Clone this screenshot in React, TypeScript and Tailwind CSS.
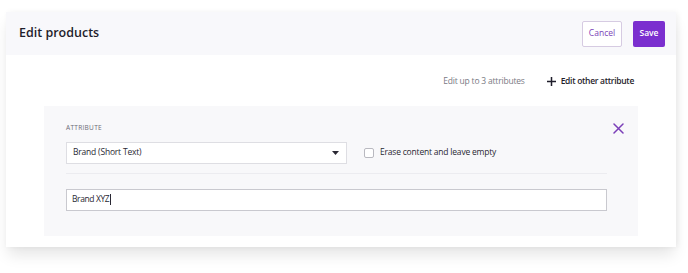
import React, { useState } from 'react';

const font = { fontFamily: '"Open Sans", "Noto Sans", sans-serif' };

const CloseIcon = () => (
  <svg width="11" height="11" viewBox="0 0 11 11" fill="none">
    <path d="M1 1L10 10M10 1L1 10" stroke="#7b3fb8" strokeWidth="1.5" strokeLinecap="round" />
  </svg>
);

const PlusIcon = () => (
  <svg width="9" height="9" viewBox="0 0 9 9" fill="none">
    <path d="M4.5 0V9M0 4.5H9" stroke="#1f1d2b" strokeWidth="1.5" />
  </svg>
);

const AttributePanel = () => {
  const [erase, setErase] = useState<boolean>(false);

  return (
    <div className="mx-[38px] mt-[18px] bg-[#f8f8fa] pl-[22px] pr-[14px] pt-[16px] pb-[25px]">
      <div className="flex h-[12px] items-start justify-between">
        <span className="mt-px text-[6.5px] uppercase tracking-[0.3px] text-[#6b6b75]">Attribute</span>
        <span className="mt-px">
          <CloseIcon />
        </span>
      </div>
      <div className="mr-[17px]">
        <div className="mt-[8px] flex items-center">
          <div className="flex h-[22px] w-[281px] items-center justify-between border border-[#dedee3] bg-white pl-[6px] pr-[7px]">
            <span className="text-[8.5px] tracking-[-0.2px] text-[#2a2833]">Brand (Short Text)</span>
            <svg width="7" height="4" viewBox="0 0 7 4">
              <path d="M0 0H7L3.5 4Z" fill="#2a2833" />
            </svg>
          </div>
          <button
            className="ml-[17px] flex items-center"
            type="button"
            onClick={() => setErase(!erase)}
          >
            <span className="h-[10px] w-[10px] rounded-[2px] border border-[#b9b9c0] bg-white" />
            <span className="ml-[6px] text-[8.5px] tracking-[-0.2px] text-[#2a2833]">
              Erase content and leave empty
            </span>
          </button>
        </div>
        <div className="mt-[9px] h-px bg-[#ececf0]" />
        <div className="mt-[15px] flex h-[22px] items-center border border-[#c9c9cf] bg-white pl-[5px]">
          <span className="text-[8.5px] tracking-[-0.4px] text-[#2a2833]">Brand XYZ</span>
          <span className="ml-px h-[11px] w-px bg-[#2a2833]" />
        </div>
      </div>
    </div>
  );
};

const App = () => (
  <div className="h-[273px] w-[688px] overflow-hidden bg-white" style={font}>
    <div className="ml-[6px] mt-[12px] w-[670px] bg-white shadow-[0_10px_14px_-2px_rgba(0,0,0,0.10),2px_0_6px_rgba(0,0,0,0.05)]">
      <div className="flex h-[43px] items-center justify-between bg-[#f8f8fb] pl-[13px] pr-[11px]">
        <h1 className="text-[12.5px] font-semibold text-[#1f1d2b]">Edit products</h1>
        <div className="flex items-center gap-[11px]">
          <button
            className="h-[26px] w-[40px] rounded-[2px] border border-[#d6cbe2] bg-white text-[8.5px] text-[#7b3fb8]"
            type="button"
          >
            Cancel
          </button>
          <button
            className="h-[26px] w-[32px] rounded-[2px] bg-[#7b2fcf] text-[8.5px] font-semibold text-white"
            type="button"
          >
            Save
          </button>
        </div>
      </div>
      <div className="pb-[11px]">
        <div className="flex items-center justify-end pr-[42px] pt-[20px]">
          <span className="text-[8.5px] tracking-[-0.2px] text-[#7a7a84]">Edit up to 3 attributes</span>
          <button className="ml-[22px] flex items-center gap-[5px]" type="button">
            <PlusIcon />
            <span className="text-[8.5px] font-semibold tracking-[-0.3px] text-[#1f1d2b]">
              Edit other attribute
            </span>
          </button>
        </div>
        <AttributePanel />
      </div>
    </div>
  </div>
);

export default App;
